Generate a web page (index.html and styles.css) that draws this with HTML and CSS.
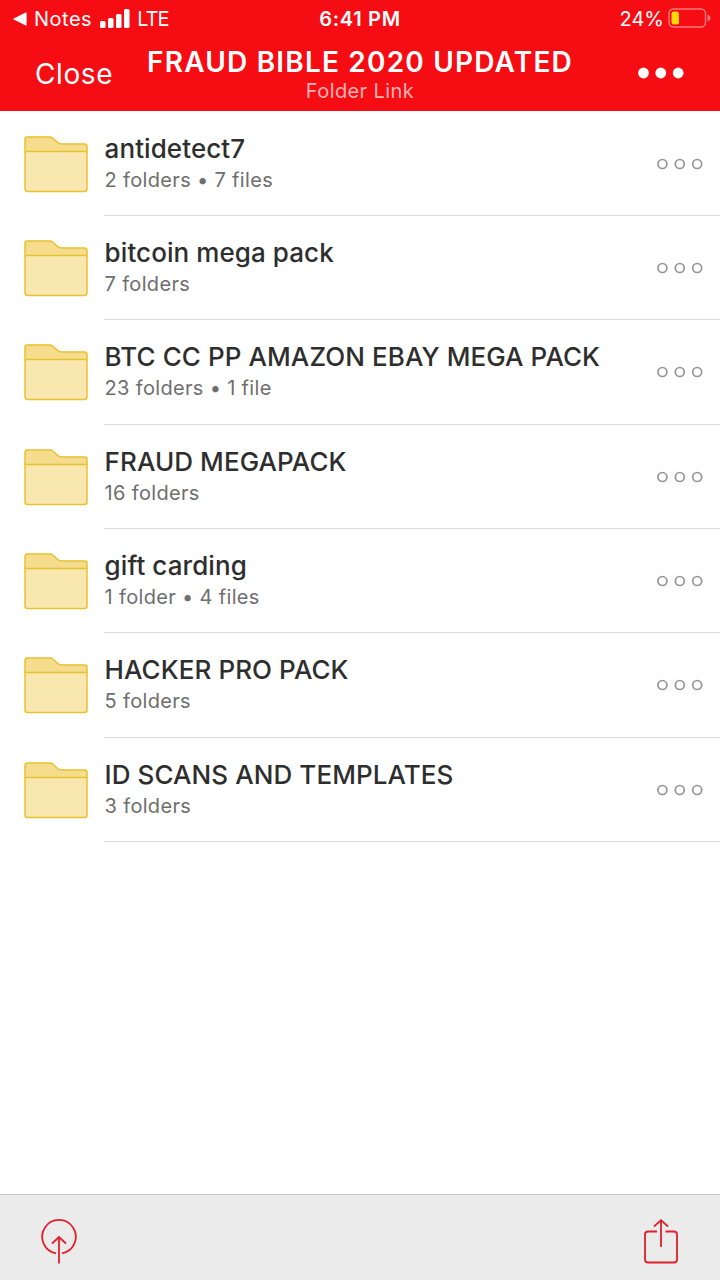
FILE: index.html
```html
<!DOCTYPE html>
<html lang="en">
<head>
    <meta charset="UTF-8">
    <meta name="viewport" content="width=device-width, initial-scale=1.0">
    <title>Folder Link</title>
    <link rel="stylesheet" href="styles.css">
</head>
<body>

<!-- Shared icons -->
<svg class="sprite" width="0" height="0">
    <symbol id="folder" viewBox="0 0 64 58">
        <path d="M1 16V4.500Q1 2 3.500 2H25.500Q27.500 2 29 3.200L34 7.700Q35.500 9 37.500 9H60.500Q63 9 63 11.500V16Z" fill="#f6dd8d"/>
        <path d="M1 16H63V54Q63 56.500 60.500 56.500H3.500Q1 56.500 1 54Z" fill="#f8e8b0"/>
        <path d="M1 16.500H63M3.500 2H25.500Q27.500 2 29 3.200L34 7.700Q35.500 9 37.500 9H60.500Q63 9 63 11.500V54Q63 56.500 60.500 56.500H3.500Q1 56.500 1 54V4.500Q1 2 3.500 2Z" fill="none" stroke="#e5c230" stroke-width="1.500"/>
    </symbol>
    <symbol id="dots" viewBox="0 0 48 12">
        <g fill="none" stroke="#949494" stroke-width="1.700">
            <circle cx="6.400" cy="6" r="4.500"/>
            <circle cx="23.800" cy="6" r="4.500"/>
            <circle cx="41.200" cy="6" r="4.500"/>
        </g>
    </symbol>
</svg>

<header class="header">
    <div class="status">
        <div class="status-left">
            <svg width="14" height="14" viewBox="0 0 14 14"><path d="M1 7L13 1V13Z" fill="#fff" stroke="#fff" stroke-width="1.200" stroke-linejoin="round"/></svg>
            <span class="back">Notes</span>
            <svg class="signal" width="30" height="19" viewBox="0 0 30 19">
                <g fill="#fff">
                    <rect x="0" y="12" width="5.500" height="7" rx="1.500"/>
                    <rect x="8" y="9" width="5.500" height="10" rx="1.500"/>
                    <rect x="16" y="5" width="5.500" height="14" rx="1.500"/>
                    <rect x="24" y="0" width="5.500" height="19" rx="1.500"/>
                </g>
            </svg>
            <span class="carrier">LTE</span>
        </div>
        <span class="time">6:41 PM</span>
        <div class="status-right">
            <span class="percent">24%</span>
            <svg class="battery" width="43" height="20" viewBox="0 0 43 20">
                <rect x="1" y="1" width="36.500" height="18" rx="4.500" fill="none" stroke="#ff7a7f" stroke-width="1.400"/>
                <rect x="3.500" y="3.500" width="7.500" height="13" rx="2.200" fill="#ffd60a"/>
                <path d="M39.500 6.800Q42.500 7.500 42.500 10T39.500 13.200Z" fill="#ff7a7f"/>
            </svg>
        </div>
    </div>
    <div class="navbar">
        <span class="close">Close</span>
        <div class="heading">
            <div class="title">FRAUD BIBLE 2020 UPDATED</div>
            <div class="subtitle">Folder Link</div>
        </div>
        <svg class="menu" width="46" height="12" viewBox="0 0 46 12">
            <g fill="#fff">
                <circle cx="5.500" cy="6" r="5.400"/>
                <circle cx="22.800" cy="6" r="5.400"/>
                <circle cx="40.200" cy="6" r="5.400"/>
            </g>
        </svg>
    </div>
</header>

<main class="list">
    <div class="row">
        <svg class="folder"><use href="#folder"/></svg>
        <div class="info">
            <div class="text">
                <div class="name">antidetect7</div>
                <div class="count">2 folders • 7 files</div>
            </div>
            <svg class="dots"><use href="#dots"/></svg>
        </div>
    </div>
    <div class="row">
        <svg class="folder"><use href="#folder"/></svg>
        <div class="info">
            <div class="text">
                <div class="name">bitcoin mega pack</div>
                <div class="count">7 folders</div>
            </div>
            <svg class="dots"><use href="#dots"/></svg>
        </div>
    </div>
    <div class="row">
        <svg class="folder"><use href="#folder"/></svg>
        <div class="info">
            <div class="text">
                <div class="name">BTC CC PP AMAZON EBAY MEGA PACK</div>
                <div class="count">23 folders • 1 file</div>
            </div>
            <svg class="dots"><use href="#dots"/></svg>
        </div>
    </div>
    <div class="row">
        <svg class="folder"><use href="#folder"/></svg>
        <div class="info">
            <div class="text">
                <div class="name">FRAUD MEGAPACK</div>
                <div class="count">16 folders</div>
            </div>
            <svg class="dots"><use href="#dots"/></svg>
        </div>
    </div>
    <div class="row">
        <svg class="folder"><use href="#folder"/></svg>
        <div class="info">
            <div class="text">
                <div class="name">gift carding</div>
                <div class="count">1 folder • 4 files</div>
            </div>
            <svg class="dots"><use href="#dots"/></svg>
        </div>
    </div>
    <div class="row">
        <svg class="folder"><use href="#folder"/></svg>
        <div class="info">
            <div class="text">
                <div class="name">HACKER PRO PACK</div>
                <div class="count">5 folders</div>
            </div>
            <svg class="dots"><use href="#dots"/></svg>
        </div>
    </div>
    <div class="row">
        <svg class="folder"><use href="#folder"/></svg>
        <div class="info">
            <div class="text">
                <div class="name">ID SCANS AND TEMPLATES</div>
                <div class="count">3 folders</div>
            </div>
            <svg class="dots"><use href="#dots"/></svg>
        </div>
    </div>
</main>

<footer class="toolbar">
    <svg width="36" height="46" viewBox="0 0 36 46" fill="none" stroke="#e0202a" stroke-width="1.800">
        <path d="M15 34.300A16.800 16.800 0 1 1 21 34.300"/>
        <path d="M18 44.500V18.500M11 24.500L18 18L25 24.500"/>
    </svg>
    <svg width="36" height="46" viewBox="0 0 36 46" fill="none" stroke="#e0202a" stroke-width="1.800">
        <path d="M14 12.500H5Q2 12.500 2 15.500V40.500Q2 43.500 5 43.500H31Q34 43.500 34 40.500V15.500Q34 12.500 31 12.500H22.500"/>
        <path d="M18 28V1.500M11 7.500L18 1.200L25 7.500"/>
    </svg>
</footer>

</body>
</html>
```
FILE: styles.css
```css
* {
    box-sizing: border-box;
}
body {
    margin: 0;
    height: 100vh;
    display: flex;
    flex-direction: column;
    background-color: #fff;
    font-family: Inter, "Liberation Sans", sans-serif;
    color: #2e2e2e;
    overflow: hidden;
}
svg {
    display: block;
    flex-shrink: 0;
}
.sprite {
    position: absolute;
}
.header {
    height: 111px;
    background-color: #f60c13;
    color: #fff;
}
.status {
    display: grid;
    grid-template-columns: 1fr auto 1fr;
    align-items: center;
    height: 37px;
    padding: 0 9px 0 13px;
    font-size: 20px;
    line-height: 24px;
}
.status-left, .status-right {
    display: flex;
    align-items: center;
}
.status-right {
    justify-content: flex-end;
    gap: 4px;
}
.back {
    margin-left: 7px;
    letter-spacing: 0.5px;
}
.signal {
    margin: 0 7px 0 8px;
}
.carrier {
    letter-spacing: -0.9px;
}
.battery {
    margin-top: -2px;
}
.time {
    font-weight: 600;
    letter-spacing: 0.7px;
    margin-left: -4px;
}
.navbar {
    display: grid;
    grid-template-columns: 147px 426px 147px;
    height: 74px;
}
.close {
    padding-left: 35px;
    font-size: 28px;
    line-height: 74px;
    letter-spacing: 0.6px;
}
.heading {
    padding-top: 8px;
    text-align: center;
    white-space: nowrap;
}
.title {
    font-size: 28px;
    font-weight: 600;
    line-height: 34px;
    letter-spacing: 1.2px;
}
.subtitle {
    font-size: 20px;
    line-height: 24px;
    letter-spacing: 0.4px;
    color: #ffb3b5;
}
.menu {
    margin: 30px 0 0 65px;
}
.list {
    flex: 1;
    padding-top: 0.7px;
}
.row {
    display: flex;
    height: 104.33px;
    padding-left: 24px;
}
.folder {
    width: 64px;
    height: 58px;
    margin: 23px 16px 0 0;
}
.info {
    flex: 1;
    display: flex;
    justify-content: space-between;
    border-bottom: 1px solid #dcdcdc;
    padding-right: 16px;
}
.text {
    padding: 21px 0 0 0.6px;
    white-space: nowrap;
}
.name {
    font-size: 26px;
    font-weight: 500;
    line-height: 32px;
    letter-spacing: 0.08px;
}
.count {
    font-size: 20px;
    line-height: 31px;
    letter-spacing: 0.33px;
    color: #6e6e6e;
}
.dots {
    width: 48px;
    height: 12px;
    margin-top: 46px;
}
/* Bottom bar */
.toolbar {
    display: flex;
    justify-content: space-between;
    height: 86px;
    padding: 24px 41px 0;
    background-color: #ebebeb;
    border-top: 1px solid #c4c4c4;
}
```
